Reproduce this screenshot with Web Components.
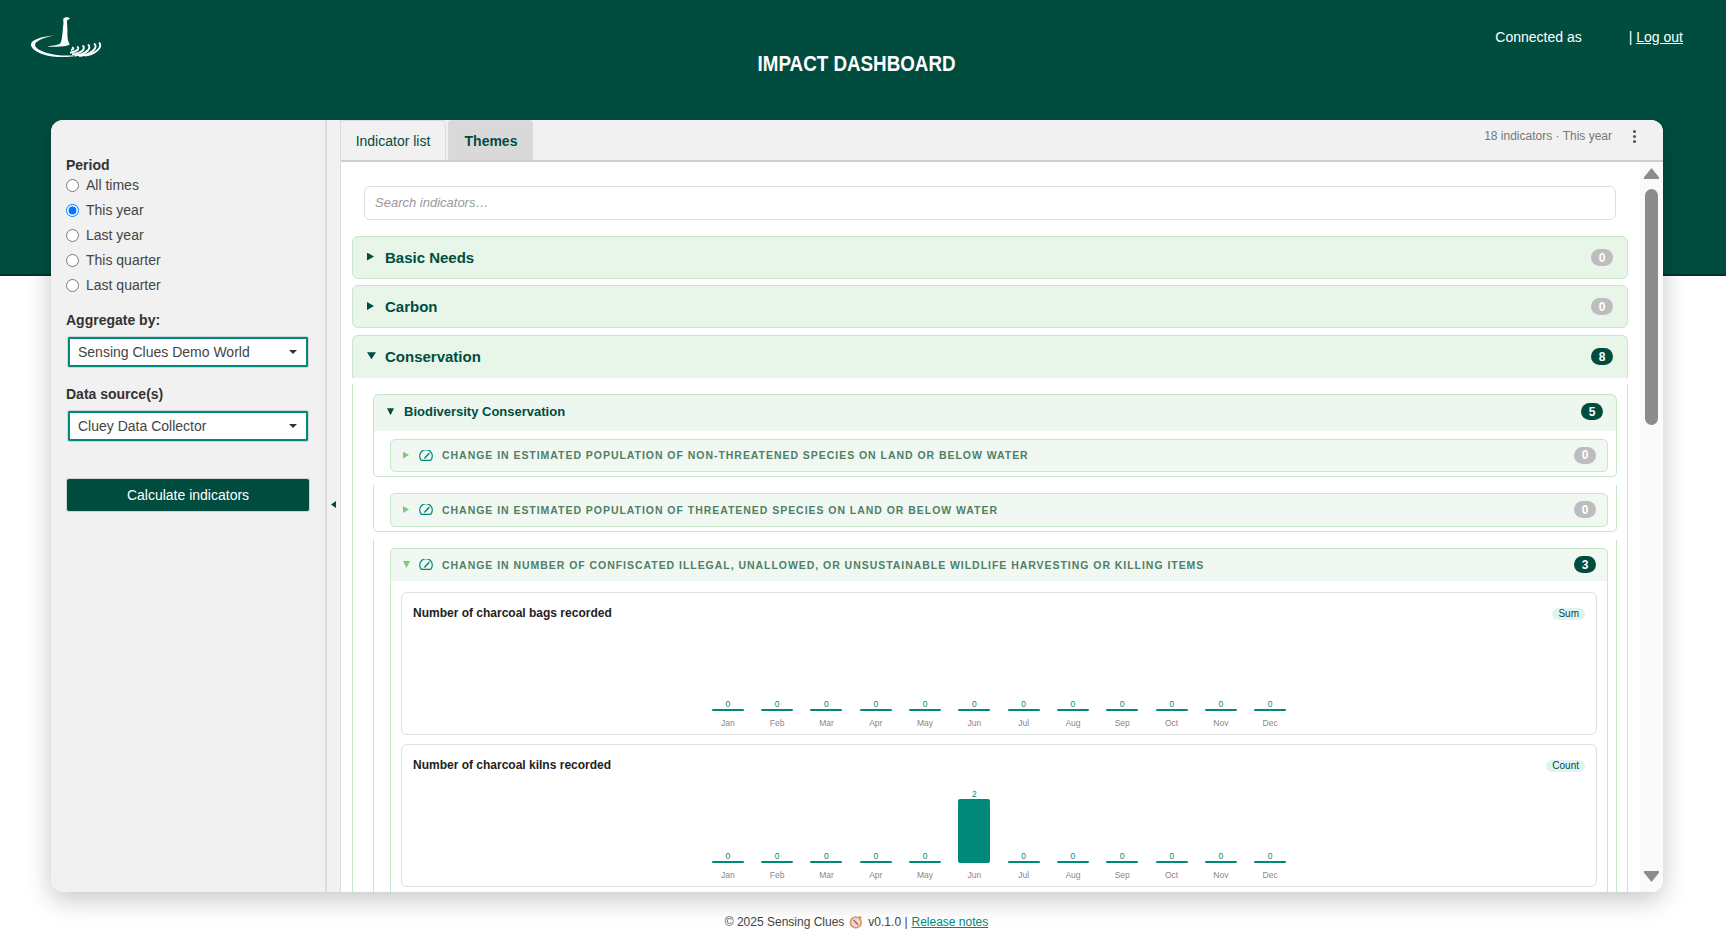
<!DOCTYPE html>
<html>
<head>
<meta charset="utf-8">
<title>Impact dashboard</title>
<style>
  html, body { margin: 0; padding: 0; background: #fff; }
  body { font-family: "Liberation Sans", Arial, sans-serif; height: 934px; overflow: hidden; }
</style>
</head>
<body>
<sc-header></sc-header>
<sc-shell>
  <sc-sidebar slot="side"></sc-sidebar>
  <sc-panel slot="main">
    <sc-theme name="Basic Needs" count="0"></sc-theme>
    <sc-theme name="Carbon" count="0"></sc-theme>
    <sc-theme name="Conservation" count="8" open>
      <sc-subtheme name="Biodiversity Conservation" count="5">
        <sc-indicator name="Change in estimated population of non-threatened species on land or below water" count="0"></sc-indicator>
        <sc-indicator name="Change in estimated population of threatened species on land or below water" count="0"></sc-indicator>
        <sc-indicator name="Change in number of confiscated illegal, unallowed, or unsustainable wildlife harvesting or killing items" count="3" open>
          <sc-chart name="Number of charcoal bags recorded" kind="Sum" values="0,0,0,0,0,0,0,0,0,0,0,0"></sc-chart>
          <sc-chart name="Number of charcoal kilns recorded" kind="Count" values="0,0,0,0,0,2,0,0,0,0,0,0"></sc-chart>
        </sc-indicator>
      </sc-subtheme>
    </sc-theme>
  </sc-panel>
</sc-shell>
<sc-footer></sc-footer>

<script>
let headerContent = `
  <style>
    :host {
      display: grid;
      grid-template-columns: 1fr auto 1fr;
      box-sizing: border-box;
      height: 276px;
      padding: 0 43px 0 30px;
      background: #004d40;
      border-bottom: 2px solid #00332b;
      color: #fff;
    }
    svg { display: block; margin-top: 16px; }
    h1 {
      margin: 50px 0 0;
      width: 197px;
      font-size: 22.5px;
      line-height: 28px;
      font-weight: bold;
      white-space: nowrap;
      display: flex;
      justify-content: center;
    }
    h1 span { display: block; transform: scaleX(0.835); }
    nav {
      justify-self: end;
      display: flex;
      margin-top: 29px;
      font-size: 14px;
      line-height: 16px;
    }
    nav span:first-child { margin-right: 47px; }
    a { color: inherit; }
  </style>
  <div>
    <svg width="72" height="42" viewBox="0 0 72 42" fill="#fff">
      <path d="M24 19.5C11 20.5 1 24 1 28.5C1 35 15 41 31 41C39 41 45 40.5 51 39C44 39.6 38 39.8 32 39.4C17 38.6 5 33.5 5 28.7C5 25 14 21.5 24 19.5Z"/>
      <path d="M33.4 2.6C35 .8 38.4 .8 40 2.4L38.6 3.6L37 4.6C36.8 8 37.6 12 37.4 17C37.4 22 37.8 25.5 39.8 28.4L36 30C30 31 24 31 17 30.4C24 29.6 28.6 29 30.6 27C32.6 22 32.6 13 33.4 8C33.6 6 33 4 33.4 2.6Z"/>
      <g fill="none" stroke="#fff" stroke-width="1.9">
        <path d="M42 31.3C44 31.8 44 33.5 41 34"/>
        <path d="M47 30.6C50 32 48 35.6 40 36.6"/>
        <path d="M52.500 29.500C56 32 53 37 42 38.400"/>
        <path d="M58 28.500C62 32 57 38 45 39.600"/>
        <path d="M64 27.500C69 31 62 38.500 49 40"/>
        <path d="M69 26.500C73 31 66 38 55 39.600"/>
      </g>
    </svg>
  </div>
  <h1><span>IMPACT DASHBOARD</span></h1>
  <nav><span>Connected as</span><span>|&nbsp;<a href="#">Log out</a></span></nav>
`;

class ScHeader extends HTMLElement {
  constructor() {
    super();
    this.attachShadow({ mode : 'open' });
    this.shadowRoot.innerHTML = headerContent;
  }
}

let shellContent = `
  <style>
    :host {
      display: flex;
      box-sizing: border-box;
      width: 1612px;
      height: 772px;
      margin: -156px 0 0 51px;
      border-radius: 12px;
      overflow: hidden;
      background: #f1f1f1;
      box-shadow: 0 8px 26px rgba(0,0,0,0.22);
      position: relative;
    }
    .handle {
      flex: none;
      width: 13px;
      display: flex;
      justify-content: center;
      padding-top: 381px;
      box-sizing: border-box;
    }
    .handle i {
      width: 5px;
      height: 7px;
      background: #004d40;
      clip-path: polygon(100% 0, 100% 100%, 0 50%);
    }
  </style>
  <slot name="side"></slot>
  <div class="handle"><i></i></div>
  <slot name="main"></slot>
`;

class ScShell extends HTMLElement {
  constructor() {
    super();
    this.attachShadow({ mode : 'open' });
    this.shadowRoot.innerHTML = shellContent;
  }
}

let sidebarContent = `
  <style>
    :host {
      display: block;
      flex: none;
      box-sizing: border-box;
      width: 276px;
      padding: 37px 15px 0 15px;
      border-right: 2px solid #dcdcdc;
      background: #f1f1f1;
      color: #444;
      font-size: 14px;
    }
    .lbl { font-weight: bold; color: #333; line-height: 16px; }
    label {
      display: flex;
      align-items: center;
      gap: 7px;
      height: 25px;
    }
    .radios { margin: -1px 0 15px; }
    input { width: 13px; height: 13px; margin: 1px 0 0; flex: none; }
    .select {
      box-sizing: border-box;
      display: flex;
      align-items: center;
      justify-content: space-between;
      height: 30px;
      width: 240px;
      margin: 9px 0 19px 2px;
      padding: 0 9px 0 8px;
      border: 2px solid #00897b;
      background: #fff;
      outline: 1px solid #cfd4d4;
      border-radius: 1px;
    }
    .select i {
      width: 8px;
      height: 4px;
      background: #333;
      clip-path: polygon(0 0, 100% 0, 50% 100%);
    }
    button {
      display: block;
      width: 244px;
      height: 34px;
      margin-top: 37px;
      border: 1px solid #cfd4d4;
      border-radius: 3px;
      background: #004d40;
      color: #fff;
      font: 14px "Liberation Sans", Arial, sans-serif;
    }
  </style>
  <div class="lbl">Period</div>
  <div class="radios">
    <label><input type="radio" name="period">All times</label>
    <label><input type="radio" name="period" checked>This year</label>
    <label><input type="radio" name="period">Last year</label>
    <label><input type="radio" name="period">This quarter</label>
    <label><input type="radio" name="period">Last quarter</label>
  </div>
  <div class="lbl">Aggregate by:</div>
  <div class="select"><span>Sensing Clues Demo World</span><i></i></div>
  <div class="lbl">Data source(s)</div>
  <div class="select" style="margin-bottom:0"><span>Cluey Data Collector</span><i></i></div>
  <button>Calculate indicators</button>
`;

class ScSidebar extends HTMLElement {
  constructor() {
    super();
    this.attachShadow({ mode : 'open' });
    this.shadowRoot.innerHTML = sidebarContent;
  }
}

let panelContent = `
  <style>
    :host {
      display: flex;
      flex-direction: column;
      flex: 1;
      min-width: 0;
      border-left: 1px solid #dcdcdc;
    }
    header {
      flex: none;
      display: flex;
      align-items: stretch;
      box-sizing: border-box;
      height: 42px;
      border-bottom: 2px solid #cfcfcf;
      background: #f1f1f1;
      font-size: 14px;
      color: #004d40;
    }
    .tab {
      box-sizing: border-box;
      display: flex;
      align-items: center;
      justify-content: center;
      border: 1px solid #dcdcdc;
      border-bottom: 0;
      border-top-left-radius: 4px;
      border-top-right-radius: 4px;
    }
    .tab:nth-child(1) { width: 106px; margin: 0 2px 0 -1px; }
    .tab:nth-child(2) { width: 85px; background: #d9d9d9; font-weight: bold; padding-left: 1px; }
    .info {
      margin: 9px 0 0 auto;
      color: #777;
      font-size: 12px;
      line-height: 14px;
    }
    .kebab {
      display: flex;
      flex-direction: column;
      gap: 2px;
      margin: 10px 27px 0 21px;
    }
    .kebab i { width: 3px; height: 3px; border-radius: 50%; background: #555; }
    .body { flex: 1; display: flex; min-height: 0; background: #fff; }
    .scroll {
      flex: 1;
      min-width: 0;
      overflow: hidden;
      padding: 24px 12px 0 11px;
    }
    .search {
      box-sizing: border-box;
      height: 34px;
      margin: 0 12px 16px;
      padding: 0 10px;
      border: 1px solid #dedede;
      border-radius: 6px;
      font-size: 13px;
      font-style: italic;
      line-height: 32px;
      color: #999;
    }
    .list { display: flex; flex-direction: column; gap: 6.4px; }
    .bar {
      flex: none;
      box-sizing: border-box;
      width: 23px;
      padding: 6px 4px 6px 4px;
      display: flex;
      flex-direction: column;
      align-items: center;
      background: #fafafa;
    }
    .up, .down { width: 15px; height: 11px; background: #8c8c8c; }
    .up { clip-path: polygon(50% 0, 100% 85%, 100% 100%, 0 100%, 0 85%); }
    .down { clip-path: polygon(0 0, 100% 0, 100% 15%, 50% 100%, 0 15%); margin-top: auto; margin-bottom: 4px; }
    .thumb { width: 13px; height: 236px; margin-top: 10px; border-radius: 7px; background: #8c8c8c; }
  </style>
  <header>
    <div class="tab">Indicator list</div>
    <div class="tab">Themes</div>
    <div class="info">18 indicators · This year</div>
    <div class="kebab"><i></i><i></i><i></i></div>
  </header>
  <div class="body">
    <div class="scroll">
      <div class="search">Search indicators…</div>
      <div class="list"><slot></slot></div>
    </div>
    <div class="bar"><div class="up"></div><div class="thumb"></div><div class="down"></div></div>
  </div>
`;

class ScPanel extends HTMLElement {
  constructor() {
    super();
    this.attachShadow({ mode : 'open' });
    this.shadowRoot.innerHTML = panelContent;
  }
}

class ScCount extends HTMLElement {
  constructor() {
    super();
    this.attachShadow({ mode : 'open' });
    this.shadowRoot.innerHTML = `
      <style>
        :host {
          display: flex;
          align-items: center;
          justify-content: center;
          flex: none;
          width: 22px;
          height: 17px;
          border-radius: 9px;
          background: #004d40;
          color: #fff;
          font-size: 12px;
          font-weight: bold;
          letter-spacing: 0;
        }
        :host([zero]) { background: #bdbdbd; }
      </style>
      <slot></slot>`;
  }
}

let themeContent = `
  <style>
    :host { display: block; }
    .head {
      box-sizing: border-box;
      display: flex;
      align-items: center;
      height: 43px;
      padding: 0 14px;
      border: 1px solid #c8e6c9;
      border-radius: 6px;
      background: #e8f5e9;
      color: #004d40;
      font-size: 15px;
      font-weight: bold;
    }
    .tri { width: 7px; height: 8px; margin: -2px 11px 0 0; background: #004d40; clip-path: polygon(0 0, 100% 50%, 0 100%); }
    .name { flex: 1; }
    :host([open]) .head { border-bottom: 0; border-radius: 6px 6px 0 0; }
    :host([open]) .tri { width: 9px; height: 7px; margin-right: 9px; clip-path: polygon(0 0, 100% 0, 50% 100%); }
    .content {
      display: none;
      margin-top: 6px;
      padding: 10px 10px 0 20px;
      border: 1px solid #c8e6c9;
      border-width: 0 1px;
    }
    :host([open]) .content { display: block; }
  </style>
  <div class="head"><i class="tri"></i><span class="name"></span><sc-count></sc-count></div>
  <div class="content"><slot></slot></div>
`;

class ScTheme extends HTMLElement {
  constructor() {
    super();
    this.attachShadow({ mode : 'open' });
    this.shadowRoot.innerHTML = themeContent;
  }

  connectedCallback() {
    this.shadowRoot.querySelector('.name').textContent = this.getAttribute('name');
    let c = this.shadowRoot.querySelector('sc-count');
    c.textContent = this.getAttribute('count');
    c.toggleAttribute('zero', this.getAttribute('count') == '0');
  }
}

let subthemeContent = `
  <style>
    :host { display: block; }
    .head {
      box-sizing: border-box;
      display: flex;
      align-items: center;
      height: 37px;
      padding: 0 13px 2px 13px;
      border: 1px solid #c8e6c9;
      border-bottom: 0;
      border-radius: 6px 6px 0 0;
      background: #edf7ef;
      color: #004d40;
      font-size: 13px;
      font-weight: bold;
    }
    .tri { width: 7px; height: 7px; margin-right: 10px; background: #004d40; clip-path: polygon(0 0, 100% 0, 50% 100%); }
    .name { flex: 1; }
  </style>
  <div class="head"><i class="tri"></i><span class="name"></span><sc-count></sc-count></div>
  <slot></slot>
`;

class ScSubtheme extends HTMLElement {
  constructor() {
    super();
    this.attachShadow({ mode : 'open' });
    this.shadowRoot.innerHTML = subthemeContent;
  }

  connectedCallback() {
    this.shadowRoot.querySelector('.name').textContent = this.getAttribute('name');
    this.shadowRoot.querySelector('sc-count').textContent = this.getAttribute('count');
  }
}

let indicatorContent = `
  <style>
    :host {
      display: block;
      box-sizing: border-box;
      margin-top: 8px;
      padding: 8px 8px 4px 16px;
      border: 1px solid #c8e6c9;
      border-top: 0;
      border-radius: 0 0 5px 5px;
    }
    :host(:first-of-type) { margin-top: 0; }
    .head {
      box-sizing: border-box;
      display: flex;
      align-items: center;
      height: 33.5px;
      padding: 0 11px 1px 12px;
      border: 1px solid #c8e6c9;
      border-radius: 5px;
      background: #f1f8f2;
      color: #4f7f66;
      font-size: 10.5px;
      font-weight: bold;
      letter-spacing: 0.96px;
      text-transform: uppercase;
    }
    .tri { flex: none; width: 6px; height: 7px; margin-right: 10px; background: #81c784; clip-path: polygon(0 0, 100% 50%, 0 100%); }
    svg { flex: none; margin-right: 9px; }
    .name { flex: 1; white-space: nowrap; }
    :host([open]) .head { border-bottom: 0; border-radius: 5px 5px 0 0; }
    :host([open]) .tri { width: 7px; margin-right: 9px; clip-path: polygon(0 0, 100% 0, 50% 100%); }
    .charts {
      display: none;
      flex-direction: column;
      gap: 9px;
      padding: 11px 10px 10px;
      border: 1px solid #c8e6c9;
      border-width: 0 1px;
    }
    :host([open]) .charts { display: flex; }
    :host([open]) { border-bottom: 0; padding-bottom: 0; }
  </style>
  <div class="head">
    <i class="tri"></i>
    <svg width="14" height="11" viewBox="0 0 14 11" fill="none" stroke="#00897b" stroke-width="1.2">
      <path d="M2.400 10.300H11.600A6.300 6.300 0 1 0 2.400 10.300Z" stroke-linejoin="round"/>
      <path d="M5.800 8 L10 3.600" stroke-width="1.500" stroke-linecap="round"/>
    </svg>
    <span class="name"></span><sc-count></sc-count>
  </div>
  <div class="charts"><slot></slot></div>
`;

class ScIndicator extends HTMLElement {
  constructor() {
    super();
    this.attachShadow({ mode : 'open' });
    this.shadowRoot.innerHTML = indicatorContent;
  }

  connectedCallback() {
    this.shadowRoot.querySelector('.name').textContent = this.getAttribute('name');
    let c = this.shadowRoot.querySelector('sc-count');
    c.textContent = this.getAttribute('count');
    c.toggleAttribute('zero', this.getAttribute('count') == '0');
  }
}

const MONTHS = ['Jan','Feb','Mar','Apr','May','Jun','Jul','Aug','Sep','Oct','Nov','Dec'];

let chartContent = `
  <style>
    :host {
      display: block;
      box-sizing: border-box;
      height: 143px;
      padding: 13px 11px 0 11px;
      border: 1px solid #e0e0e0;
      border-radius: 6px;
      background: #fff;
    }
    .top { display: flex; justify-content: space-between; align-items: flex-start; height: 14px; }
    .title { font-size: 12px; line-height: 14px; font-weight: bold; color: #222; }
    .kind {
      padding: 0 6px;
      height: 12px;
      margin-top: 2px;
      border-radius: 6px;
      background: #e0f2f1;
      color: #004d40;
      font-size: 10px;
      line-height: 12px;
    }
    .plot {
      display: flex;
      justify-content: center;
      align-items: flex-end;
      gap: 17.3px;
      height: 108px;
    }
    .col { width: 32px; display: flex; flex-direction: column; align-items: center; }
    .val { font-size: 8.5px; line-height: 8px; margin-bottom: 1px; color: #00897b; }
    .bar { width: 100%; background: #00897b; border-radius: 2px; min-height: 2px; }
    .mon { font-size: 8.5px; line-height: 10px; color: #888; margin-top: 7px; }
  </style>
  <div class="top"><span class="title"></span><span class="kind"></span></div>
  <div class="plot"></div>
`;

class ScChart extends HTMLElement {
  constructor() {
    super();
    this.attachShadow({ mode : 'open' });
    this.shadowRoot.innerHTML = chartContent;
  }

  connectedCallback() {
    this.shadowRoot.querySelector('.title').textContent = this.getAttribute('name');
    this.shadowRoot.querySelector('.kind').textContent = this.getAttribute('kind');
    let plot = this.shadowRoot.querySelector('.plot');
    this.getAttribute('values').split(',').forEach((v, i) => {
      let col = document.createElement('div');
      col.className = 'col';
      col.innerHTML = `<span class="val">${v}</span><div class="bar" style="height:${v * 32}px"></div><span class="mon">${MONTHS[i]}</span>`;
      plot.append(col);
    });
  }
}

let footerContent = `
  <style>
    :host {
      display: flex;
      justify-content: center;
      align-items: center;
      gap: 4px;
      box-sizing: border-box;
      height: 42px;
      padding: 18px 13px 0 0;
      font-size: 12px;
      color: #444;
    }
    a { color: #00897b; }
    svg { margin: 0 1px; }
  </style>
  <span>© 2025 Sensing Clues</span>
  <svg width="14" height="14" viewBox="0 0 14 14">
    <circle cx="11" cy="2.600" r="1.500" fill="#d99a55"/>
    <circle cx="6.800" cy="7.400" r="5.400" fill="#ead9de" stroke="#dc9d5a" stroke-width="1.700"/>
    <path d="M4.600 5 L9 9.800" stroke="#c25a6a" stroke-width="1.400"/>
  </svg>
  <span>v0.1.0 |</span>
  <a href="#">Release notes</a>
`;

class ScFooter extends HTMLElement {
  constructor() {
    super();
    this.attachShadow({ mode : 'open' });
    this.shadowRoot.innerHTML = footerContent;
  }
}

customElements.define('sc-count', ScCount);
customElements.define('sc-header', ScHeader);
customElements.define('sc-shell', ScShell);
customElements.define('sc-sidebar', ScSidebar);
customElements.define('sc-panel', ScPanel);
customElements.define('sc-theme', ScTheme);
customElements.define('sc-subtheme', ScSubtheme);
customElements.define('sc-indicator', ScIndicator);
customElements.define('sc-chart', ScChart);
customElements.define('sc-footer', ScFooter);
</script>
</body>
</html>
